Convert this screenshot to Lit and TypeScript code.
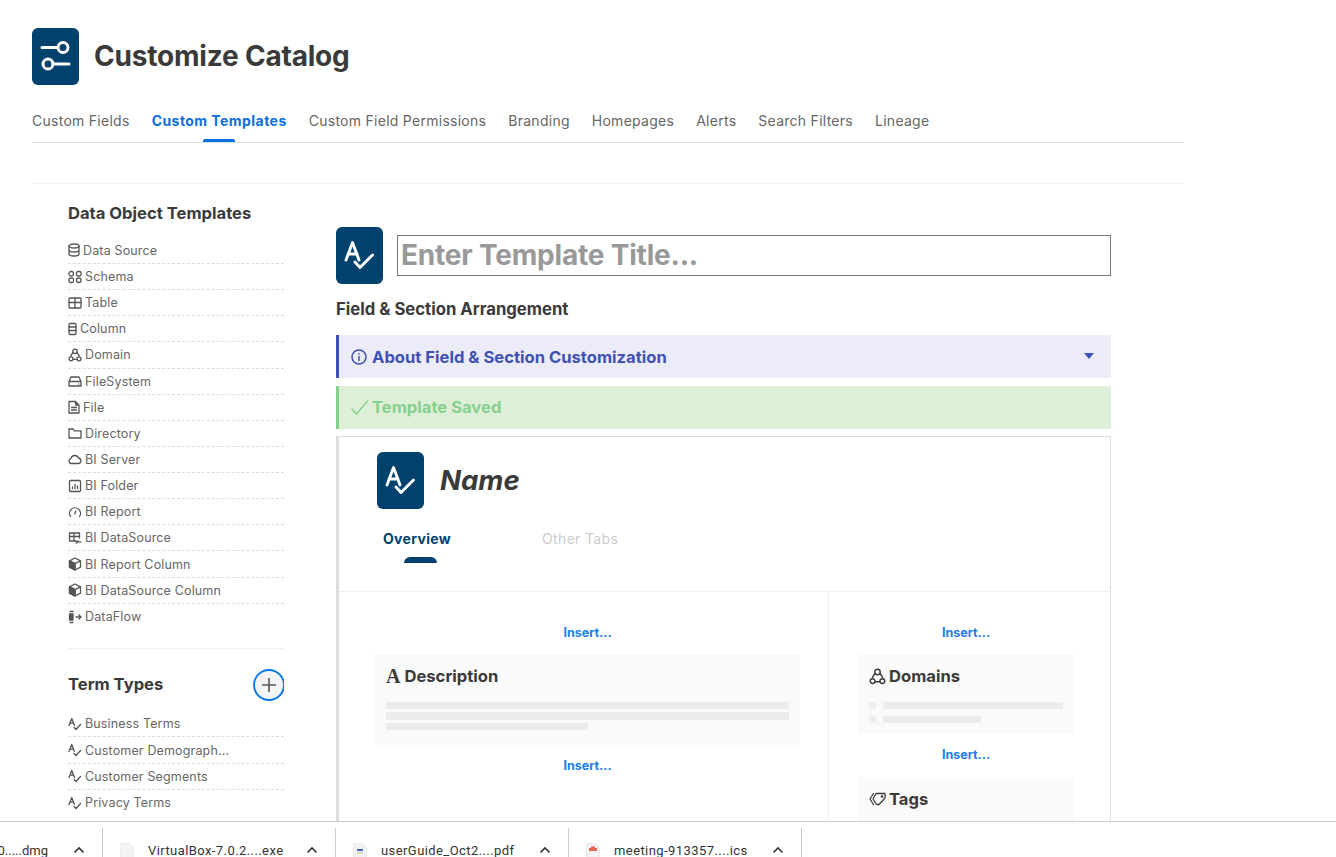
import { html, css, svg, LitElement } from "lit";
import { customElement } from "lit/decorators.js";

const s = (body: unknown, w = 14, h = 14) =>
  html`<svg class="ico" width=${w} height=${h} viewBox="0 0 ${w} ${h}" fill="none" stroke="currentColor" stroke-width="1.3" stroke-linecap="round" stroke-linejoin="round">${body}</svg>`;

const domainPaths = svg`<path d="M5 4.300 2.600 8.200M9 4.300l2.400 3.900M4.600 11.300h4.800" /><path d="M4.800 3.300a2.200 2.200 0 1 1 4.400 0 2.200 2.200 0 1 1-4.400 0zM1 10.800a2 2 0 1 1 4 0 2 2 0 1 1-4 0zM9 10.800a2 2 0 1 1 4 0 2 2 0 1 1-4 0z" />`;

const icons: Record<string, unknown> = {
  db: s(svg`<ellipse cx="6" cy="3" rx="5" ry="2"/><path d="M1 3v8c0 1.100 2.200 2 5 2s5-.9 5-2V3M1 7c0 1.100 2.200 2 5 2s5-.9 5-2"/>`, 12),
  schema: s(svg`<rect x="1" y="1.500" width="4.500" height="4.500" rx="2"/><rect x="8.500" y="1.500" width="4.500" height="4.500" rx="1.500"/><rect x="1" y="8" width="4.500" height="4.500" rx="1.500"/><rect x="8.500" y="8" width="4.500" height="4.500" rx="2"/>`),
  table: s(svg`<rect x="1" y="2" width="12" height="10" rx="1"/><path d="M1 6.500h12M7 2v10"/>`),
  column: s(svg`<rect x="1" y="1.500" width="7" height="11" rx="1"/><path d="M1 5h7M1 8.500h7"/>`, 9),
  domain: s(domainPaths),
  fs: s(svg`<path d="M1 7.500 3 3h8l2 4.500V12H1zM1 7.500h12"/><path d="M10.500 10h.01"/>`),
  file: s(svg`<path d="M1 1.500h6.500L11 5v8H1zM7.500 1.500V5H11M3.500 7.500h5M3.500 10h5"/>`, 12),
  folder: s(svg`<path d="M1 3h4l1.500 1.800H13V12H1z"/>`),
  cloud: s(svg`<path d="M3.500 11.500a2.500 2.500 0 0 1-.6-4.900 4 4 0 0 1 7.600-.6 2.800 2.800 0 0 1 .2 5.500z"/>`),
  chart: s(svg`<rect x="1.500" y="1.500" width="11" height="11" rx="1"/><path d="M4.500 9.500V8M7 9.500v-4M9.500 9.500V7"/>`),
  gauge: s(svg`<path d="M2.500 11.500a5.500 5.500 0 1 1 9 0M7.800 6 6.800 9"/>`),
  ds: s(svg`<path d="M9 10H1.500V2h10v5M1.500 5.500h10M6 2v8M8 12c1 0 1.500-1.500 2.500-1.500s1 1 2.500.5"/>`),
  cube: s(svg`<path d="M7 1 1.500 3.800v6.400L7 13l5.500-2.800V3.800zM1.500 3.800 7 6.600l5.500-2.800M7 6.600V13"/><path d="M1.500 3.800 7 6.600V13l-5.500-2.800z" fill="currentColor"/>`),
  flow: s(svg`<path d="M2 1.500h3M2 12.500h3" /><path d="M1.500 4h3.500v6H1.500z" fill="currentColor"/><path d="M8 7h5M11 5l2 2-2 2"/>`),
  term: s(svg`<path d="M1 8.500 3.800 1.500l2.600 7M2 6.200h3.400M6 10.500l2 2 4.500-5"/>`),
};

// the A-with-check mark used on the navy tiles
const termTile = html`<div class="tile">
  <svg width="47" height="57" viewBox="0 0 47 57" fill="none" stroke="#fff" stroke-width="2.900" stroke-linecap="round" stroke-linejoin="round">
    <path d="M10 33 16.500 15.500 23 33M12 27h9M19 35l5 5.500L36.500 28"/>
  </svg>
</div>`;

const objects = [
  ["db", "Data Source"], ["schema", "Schema"], ["table", "Table"], ["column", "Column"],
  ["domain", "Domain"], ["fs", "FileSystem"], ["file", "File"], ["folder", "Directory"],
  ["cloud", "BI Server"], ["chart", "BI Folder"], ["gauge", "BI Report"], ["ds", "BI DataSource"],
  ["cube", "BI Report Column"], ["cube", "BI DataSource Column"], ["flow", "DataFlow"],
];
const terms = ["Business Terms", "Customer Demograph...", "Customer Segments", "Privacy Terms"];
const tabs = ["Custom Fields", "Custom Templates", "Custom Field Permissions", "Branding", "Homepages", "Alerts", "Search Filters", "Lineage"];
const downloads = [
  { name: "0.....dmg", kind: "none" },
  { name: "VirtualBox-7.0.2....exe", kind: "blank" },
  { name: "userGuide_Oct2....pdf", kind: "pdf" },
  { name: "meeting-913357....ics", kind: "cal" },
];

@customElement("app-root")
export class AppRoot extends LitElement {
  static styles = css`
    :host {
      display: flex;
      flex-direction: column;
      width: 1336px;
      height: 857px;
      overflow: hidden;
      background: #fff;
      font-family: "Inter", "Liberation Sans", sans-serif;
      color: #3a3a3a;
    }
    .page {
      flex: 1;
      min-height: 0;
      overflow: hidden;
      padding: 28px 0 0 32px;
    }
    .content {
      width: 1152px;
    }
    .header {
      display: flex;
      align-items: center;
      gap: 15px;
      height: 57px;
    }
    .tile {
      flex: none;
      width: 47px;
      height: 57px;
      border-radius: 6px;
      background: #00416d;
      display: flex;
    }
    h1 {
      margin: -1px 0 0;
      font-size: 28px;
      font-weight: 700;
      letter-spacing: -0.2px;
    }
    .tabs {
      display: flex;
      gap: 22px;
      height: 31px;
      padding-top: 26px;
      border-bottom: 1px solid #d5dfe6;
    }
    .tab {
      position: relative;
      font-size: 14px;
      line-height: 20px;
      letter-spacing: 0.27px;
      color: #666;
    }
    .tab.on {
      color: #0a6fdc;
      font-weight: 700;
      letter-spacing: 0.45px;
    }
    .tab.on::after {
      content: "";
      position: absolute;
      left: 50%;
      margin-left: -16px;
      top: 28px;
      width: 32px;
      height: 3px;
      border-radius: 2px 2px 0 0;
      background: #0a6fdc;
    }
    .rule {
      margin-top: 40px;
      border-top: 1px solid #eee;
    }
    .body {
      display: flex;
      gap: 52px;
      padding-left: 36px;
    }
    .side {
      flex: none;
      width: 216px;
      padding-top: 18px;
    }
    h2 {
      margin: 0;
      font-size: 16.6px;
      line-height: 22px;
      font-weight: 700;
    }
    .list {
      margin-top: 13.8px;
    }
    .row {
      height: 26.15px;
      box-sizing: border-box;
      display: flex;
      align-items: center;
      gap: 3px;
      font-size: 12.5px;
      letter-spacing: 0.15px;
      color: #666;
      border-bottom: 1px dashed #ddd;
    }
    .row:last-child {
      border-bottom: none;
    }
    .ico {
      flex: none;
      color: #555;
    }
    .side hr {
      margin: 18px 0 0;
      border: none;
      border-top: 1px solid #eee;
    }
    .term-head {
      display: flex;
      align-items: center;
      justify-content: space-between;
      height: 32px;
      margin-top: 20px;
      overflow: hidden;
    }
    .term-head h2 {
      margin-top: -2px;
    }
    .add {
      box-sizing: border-box;
      width: 32px;
      height: 32px;
      margin-right: -1px;
      border: 2px solid #0a78e6;
      border-radius: 50%;
      background: #f4f4f4;
      display: flex;
      align-items: center;
      justify-content: center;
    }
    .term-head + .list {
      margin-top: 10.4px;
    }
    .main {
      flex: none;
      width: 775px;
      padding-top: 43px;
    }
    .title-row {
      display: flex;
      align-items: center;
      gap: 14px;
    }
    .title-input {
      flex: 1;
      box-sizing: border-box;
      height: 41px;
      border: 1px solid #777;
      padding-left: 3px;
      font-size: 28px;
      line-height: 39px;
      font-weight: 700;
      color: #999;
      letter-spacing: -0.2px;
    }
    h3 {
      margin: 14px 0 0;
      font-size: 16.7px;
      line-height: 22px;
      font-weight: 700;
    }
    .bar {
      box-sizing: border-box;
      height: 43px;
      display: flex;
      align-items: center;
      padding: 0 17px 0 12px;
      border-left: 3px solid;
      font-size: 16.6px;
      font-weight: 700;
    }
    .bar.info {
      margin-top: 15px;
      gap: 5px;
      background: #ebecf7;
      border-color: #3f51b5;
      color: #3f51b5;
    }
    .bar.ok {
      margin-top: 8px;
      gap: 3px;
      padding-bottom: 2px;
      background: #deefd8;
      border-color: #85d08c;
      color: #85d08c;
    }
    .caret {
      margin-left: auto;
      width: 0;
      height: 0;
      border: 5px solid transparent;
      border-top: 6px solid #3f51b5;
      border-bottom: none;
      margin-top: -2px;
    }
    .canvas {
      margin-top: 7px;
      border: 1px solid #ddd;
      border-left-width: 3px;
      border-bottom: none;
    }
    .c-head {
      display: flex;
      align-items: center;
      gap: 16px;
      padding: 15px 0 0 38px;
    }
    .c-name {
      margin-top: -2px;
      font-size: 27.5px;
      font-weight: 700;
      font-style: italic;
    }
    .c-tabs {
      display: flex;
      gap: 91px;
      padding: 20px 0 28px 44px;
      border-bottom: 1px solid #eee;
      font-size: 14px;
      line-height: 20px;
      letter-spacing: 0.33px;
    }
    .c-tab {
      color: #ccc;
    }
    .c-tab.on {
      color: #00416d;
      font-weight: 700;
    }
    .c-tab.on::after {
      content: "";
      display: block;
      width: 33px;
      height: 6px;
      margin: 8px 0 0 21px;
      border-radius: 6px 6px 0 0;
      background: #00416d;
    }
    .cols {
      display: grid;
      grid-template-columns: 490px 1fr;
    }
    .col {
      padding-top: 32px;
    }
    .col.left {
      border-right: 1px solid #eee;
      padding-left: 36px;
      padding-right: 28px;
    }
    .col.right {
      padding-left: 29px;
      padding-right: 36px;
    }
    .insert {
      font-size: 12.5px;
      line-height: 18px;
      font-weight: 700;
      text-align: center;
      color: #1a7fe8;
    }
    .card {
      margin: 12px 0 12px;
      padding: 11px;
      background: #fafafa;
    }
    .card + .insert + .card {
      margin-top: 13px;
    }
    .card-title {
      display: flex;
      align-items: center;
      gap: 3px;
      height: 22px;
      font-size: 16.6px;
      font-weight: 700;
    }
    .serif-a {
      font-family: "Liberation Serif", serif;
      font-size: 20px;
      font-weight: 700;
      margin-right: 1px;
    }
    .lines {
      display: flex;
      flex-direction: column;
      gap: 3px;
      margin-top: 15px;
      padding-bottom: 4px;
    }
    .ph {
      height: 7px;
      background: #ececec;
    }
    .ph.tall {
      height: 8px;
    }
    .ph.half {
      width: 50%;
    }
    .chips {
      display: grid;
      grid-template-columns: 7px 1fr;
      gap: 7px;
      margin-top: 15px;
    }
    .ph.sq {
      background: #eee;
    }
    .ph.short {
      width: 98px;
    }
    .downloads {
      flex: none;
      height: 36px;
      box-sizing: border-box;
      border-top: 1px solid #ccc;
      display: flex;
      overflow: hidden;
      font-family: "Roboto", "Liberation Sans", sans-serif;
      font-size: 13px;
      color: #333;
      padding-top: 6px;
    }
    .dl {
      flex: none;
      width: 233px;
      box-sizing: border-box;
      border-right: 1px solid #ccc;
      display: flex;
      align-items: flex-end;
      padding-left: 17px;
    }
    .dl:first-child {
      margin-left: -130px;
    }
    .dl-icon {
      width: 14px;
      height: 18px;
      margin-bottom: -4px;
      flex: none;
    }
    .dl-name {
      width: 136px;
      margin-left: 14px;
      line-height: 16px;
      margin-bottom: -2px;
      white-space: nowrap;
      letter-spacing: 0.42px;
    }
    .dl:first-child .dl-name {
      width: 133px;
      margin-right: 3px;
      text-align: right;
      letter-spacing: 0;
    }
    .dl-chev {
      margin: 0 0 3px 22px;
    }
  `;

  private fileIcon(kind: string) {
    if (kind === "none") return html`<span class="dl-icon"></span>`;
    return html`<svg class="dl-icon" viewBox="0 0 14 18">
      <path d="M0.500 0.500h9l4 4v13h-13z" fill="#f3f3f3" stroke="#ececec" />
      ${kind === "pdf" ? svg`<path d="M4 6h6v2H4z" fill="#3a6bc5" /><path d="M4 9.500h6v1H4z" fill="#bbb" />` : ""}
      ${kind === "cal" ? svg`<path d="M3 5h8v3H3z" fill="#e8605a" /><path d="M5 3.500h4v2H5z" fill="#e8605a" />` : ""}
    </svg>`;
  }

  render() {
    return html`
      <div class="page">
        <div class="content">
          <div class="header">
            <div class="tile">
              <svg width="47" height="57" viewBox="0 0 47 57" fill="none" stroke="#fff" stroke-width="3" stroke-linecap="round">
                <path d="M10 19.500h15M21 36h16" />
                <circle cx="31" cy="19.500" r="5" />
                <circle cx="16" cy="36" r="5" />
              </svg>
            </div>
            <h1>Customize Catalog</h1>
          </div>
          <div class="tabs">
            ${tabs.map((t) => html`<div class="tab ${t === "Custom Templates" ? "on" : ""}">${t}</div>`)}
          </div>
          <div class="rule"></div>
          <div class="body">
            <div class="side">
              <h2>Data Object Templates</h2>
              <div class="list">
                ${objects.map(([ic, label]) => html`<div class="row">${icons[ic]}<span>${label}</span></div>`)}
              </div>
              <hr />
              <div class="term-head">
                <h2>Term Types</h2>
                <div class="add">
                  <svg width="16" height="16" viewBox="0 0 16 16" stroke="#555" stroke-width="1.600"><path d="M8 1v14M1 8h14" /></svg>
                </div>
              </div>
              <div class="list">
                ${terms.map((t) => html`<div class="row">${icons.term}<span>${t}</span></div>`)}
              </div>
            </div>
            <div class="main">
              <div class="title-row">
                ${termTile}
                <div class="title-input">Enter Template Title...</div>
              </div>
              <h3>Field &amp; Section Arrangement</h3>
              <div class="bar info">
                <svg width="16" height="16" viewBox="0 0 16 16" fill="none" stroke="currentColor" stroke-width="1.500" stroke-linecap="round">
                  <circle cx="8" cy="8" r="7" /><path d="M8 7.500v4M8 4.800v.1" />
                </svg>
                About Field &amp; Section Customization
                <span class="caret"></span>
              </div>
              <div class="bar ok">
                <svg width="18" height="16" viewBox="0 0 18 16" fill="none" stroke="currentColor" stroke-width="1.400" stroke-linecap="round">
                  <path d="M1 10l4.500 5L16.500 2" />
                </svg>
                Template Saved
              </div>
              <div class="canvas">
                <div class="c-head">
                  ${termTile}
                  <div class="c-name">Name</div>
                </div>
                <div class="c-tabs">
                  <div class="c-tab on">Overview</div>
                  <div class="c-tab">Other Tabs</div>
                </div>
                <div class="cols">
                  <div class="col left">
                    <div class="insert">Insert...</div>
                    <div class="card">
                      <div class="card-title"><span class="serif-a">A</span>Description</div>
                      <div class="lines">
                        <div class="ph"></div>
                        <div class="ph tall"></div>
                        <div class="ph half"></div>
                      </div>
                    </div>
                    <div class="insert">Insert...</div>
                  </div>
                  <div class="col right">
                    <div class="insert">Insert...</div>
                    <div class="card">
                      <div class="card-title">
                        <svg class="ico" width="17" height="17" viewBox="0 0 14 14" fill="none" stroke="#3a3a3a" stroke-width="1.200">${domainPaths}</svg>
                        Domains
                      </div>
                      <div class="chips">
                        <div class="ph sq"></div><div class="ph"></div>
                        <div class="ph sq"></div><div class="ph short"></div>
                      </div>
                    </div>
                    <div class="insert">Insert...</div>
                    <div class="card">
                      <div class="card-title">
                        <svg class="ico" width="17" height="14" viewBox="0 0 17 14" fill="none" stroke="#3a3a3a" stroke-width="1.300" stroke-linejoin="round" stroke-linecap="round"><path d="M7 1.500h9v4.500l-6 6.500H7.500L4 7zM4.500 1.500 1 7l3.500 5.500" /><circle cx="13" cy="4.500" r=".7" /></svg>
                        Tags
                      </div>
                    </div>
                  </div>
                </div>
              </div>
            </div>
          </div>
        </div>
      </div>
      <div class="downloads">
        ${downloads.map(
          (d) => html`<div class="dl">
            ${this.fileIcon(d.kind)}
            <span class="dl-name">${d.name}</span>
            <svg class="dl-chev" width="12" height="8" viewBox="0 0 12 8" fill="none" stroke="#333" stroke-width="1.600"><path d="M1.500 6.500 6 2l4.500 4.500" /></svg>
          </div>`
        )}
      </div>
    `;
  }
}
